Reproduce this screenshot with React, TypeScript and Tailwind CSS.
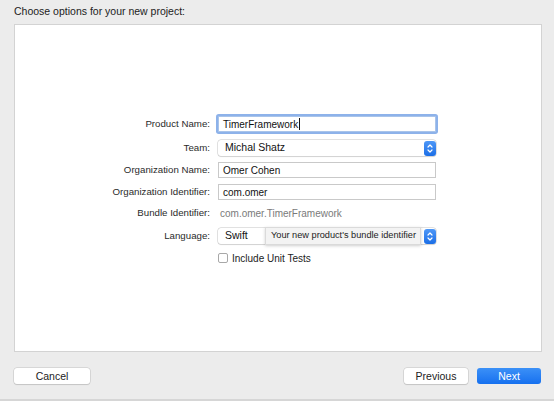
import React from "react";

function Stepper() {
  return (
    <div className="h-[15px] w-[12px] rounded-[3px] bg-gradient-to-b from-[#4d97f7] to-[#1a6ee6] flex items-center justify-center">
      <svg width="12" height="15" viewBox="0 0 12 15" fill="none">
        <path d="M4 6 L6 4 L8 6" stroke="white" strokeWidth="1.2" strokeLinecap="round" strokeLinejoin="round" />
        <path d="M4 9 L6 11 L8 9" stroke="white" strokeWidth="1.2" strokeLinecap="round" strokeLinejoin="round" />
      </svg>
    </div>
  );
}

function Row({ label, children, h = "h-[16px]" }: { label: string; children: React.ReactNode; h?: string }) {
  return (
    <div className={`flex items-center ${h}`}>
      <div className="w-[111px] text-right text-[9.7px] text-[#2a2a2a] pr-[1px]">{label}</div>
      <div className="ml-[7px] w-[218px] h-full flex items-center relative">{children}</div>
    </div>
  );
}

export default function App() {
  return (
    <div
      className="w-[554px] h-[401px] bg-[#ececec] flex flex-col border-b-2 border-[#d6d6d6]"
      style={{ fontFamily: '"Liberation Sans", Arial, sans-serif' }}
    >
      <div className="h-[24px] pl-[14px] pt-[5px] text-[10.5px] leading-[12px] text-[#222]">
        Choose options for your new project:
      </div>

      <div className="ml-[14px] w-[528px] h-[328px] bg-white border border-[#d3d3d3] pt-[91px] pl-[85px]">
        <div className="flex flex-col">
          <Row label="Product Name:">
            <div className="w-full h-[16px] border border-[#a9c4ea] shadow-[0_0_0_2px_#8db2ea] rounded-[1px] bg-white flex items-center pl-[4px] text-[10px] text-[#111]">
              TimerFramework
              <span className="w-[1px] h-[12px] bg-[#111] ml-[1px]" />
            </div>
          </Row>
          <div className="h-[8px]" />
          <Row label="Team:">
            <div className="w-full h-[16px] rounded-[3px] bg-white shadow-[0_0_0_0.5px_#c4c4c4,0_1px_1px_rgba(0,0,0,0.12)] flex items-center justify-between pl-[7px] pr-[0.5px] text-[10.5px] text-[#111]">
              <span>Michal Shatz</span>
              <Stepper />
            </div>
          </Row>
          <div className="h-[6px]" />
          <Row label="Organization Name:">
            <div className="w-full h-[16px] border border-[#c9c9c9] bg-white flex items-center pl-[4px] text-[10px] text-[#111]">
              Omer Cohen
            </div>
          </Row>
          <div className="h-[6px]" />
          <Row label="Organization Identifier:">
            <div className="w-full h-[16px] border border-[#c9c9c9] bg-white flex items-center pl-[4px] text-[10px] text-[#111]">
              com.omer
            </div>
          </Row>
          <div className="h-[6px]" />
          <Row label="Bundle Identifier:" h="h-[14px]">
            <span className="pl-[2px] text-[10px] text-[#7a7a7a]">com.omer.TimerFramework</span>
          </Row>
          <div className="h-[8px]" />
          <Row label="Language:">
            <div className="w-full h-[16px] rounded-[3px] bg-white shadow-[0_0_0_0.5px_#c4c4c4,0_1px_1px_rgba(0,0,0,0.12)] flex items-center justify-between pl-[7px] pr-[0.5px] text-[10.5px] text-[#111]">
              <span>Swift</span>
              <Stepper />
            </div>
            <div className="absolute left-[47px] top-[-1px] w-[156px] h-[18px] bg-[#f3f3f3] border border-[#dadada] shadow-[0_1px_3px_rgba(0,0,0,0.18)] flex items-center pl-[5px] text-[9.2px] text-[#222] whitespace-nowrap">
              Your new product's bundle identifier
            </div>
          </Row>
          <div className="h-[7px]" />
          <div className="flex items-center h-[14px] pl-[118px]">
            <div className="w-[10px] h-[10px] rounded-[2px] border border-[#a8a8a8] bg-white" />
            <span className="ml-[4px] text-[10px] text-[#222]">Include Unit Tests</span>
          </div>
        </div>
      </div>

      <div className="flex items-center mt-[16px] px-[14px] h-[16px] text-[10.5px]">
        <button className="w-[76px] h-[16px] rounded-[3px] bg-white shadow-[0_0_0_0.5px_#c2c2c2,0_1px_1px_rgba(0,0,0,0.15)] text-[#222] leading-none">
          Cancel
        </button>
        <div className="flex-1" />
        <button className="w-[64px] h-[16px] rounded-[3px] bg-white shadow-[0_0_0_0.5px_#c2c2c2,0_1px_1px_rgba(0,0,0,0.15)] text-[#222] leading-none">
          Previous
        </button>
        <button className="ml-[9px] w-[64px] h-[16px] rounded-[3px] bg-gradient-to-b from-[#3b90f7] to-[#1570ef] text-white leading-none mr-[-1px]">
          Next
        </button>
      </div>
    </div>
  );
}
